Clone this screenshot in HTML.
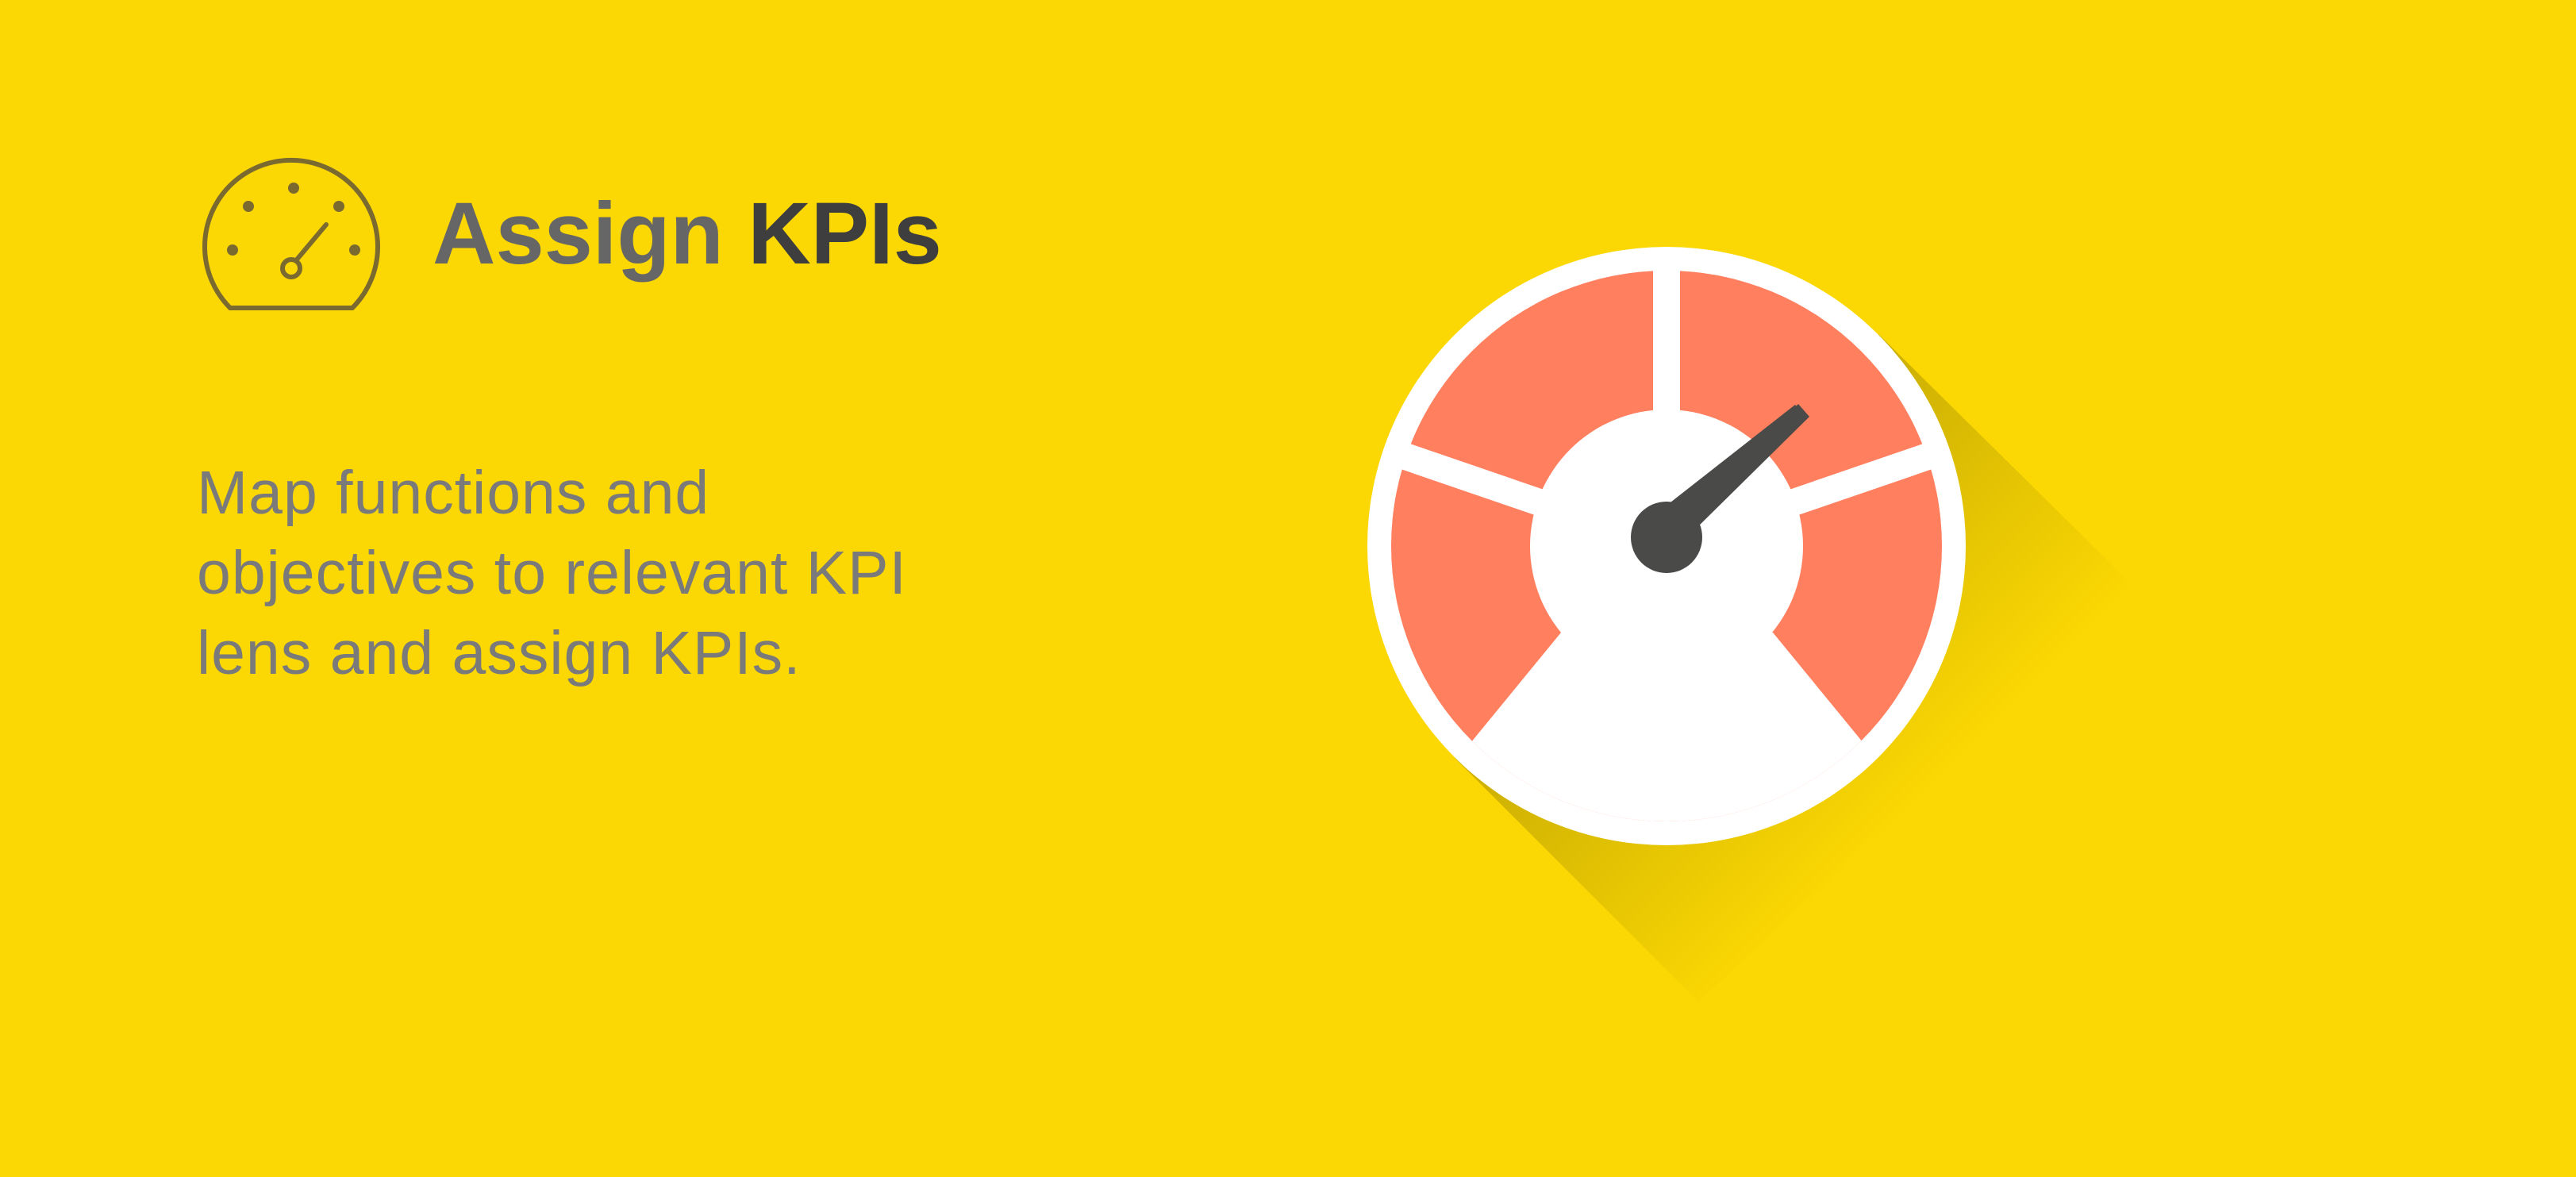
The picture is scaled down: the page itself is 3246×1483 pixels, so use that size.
<!DOCTYPE html>
<html><head><meta charset="utf-8"><style>
html,body{margin:0;padding:0}
body{width:3246px;height:1483px;background:#FBD703;position:relative;overflow:hidden;font-family:"Liberation Sans",Arial,sans-serif}
.title{position:absolute;left:545px;top:240px;font-size:110px;font-weight:bold;line-height:1;letter-spacing:0;white-space:nowrap}
.title .a{color:#666}.title .b{color:#3e3e3e}
.para{position:absolute;left:248px;top:571px;font-size:77px;line-height:101px;color:#7a7a7a;white-space:nowrap;font-family:"Liberation Sans Narrow","Liberation Sans",sans-serif;letter-spacing:1px}
svg{position:absolute;left:0;top:0}
</style></head><body>
<svg width="3246" height="1483" viewBox="0 0 3246 1483">
<defs>
<linearGradient id="sh" gradientUnits="userSpaceOnUse" x1="2100" y1="688" x2="2420" y2="1008">
<stop offset="0" stop-color="#000" stop-opacity="0.2"/>
<stop offset="1" stop-color="#000" stop-opacity="0"/>
</linearGradient>
<clipPath id="cc"><circle cx="2100" cy="688" r="347"/></clipPath>
<clipPath id="co"><circle cx="2100" cy="688" r="376"/></clipPath>
</defs>
<polygon points="2367,421 2700,750 2140,1262 1833,955" fill="url(#sh)"/>
<circle cx="2100" cy="688" r="377" fill="#fff"/>
<circle cx="2100" cy="688" r="347" fill="#FF7F5E"/>
<g stroke="#fff" stroke-width="34" clip-path="url(#co)">
<line x1="2100" y1="688" x2="2100" y2="300"/>
<line x1="2100" y1="688" x2="1730" y2="561"/>
<line x1="2100" y1="688" x2="2470" y2="561"/>
</g>
<circle cx="2100" cy="688" r="172" fill="#fff"/>
<polygon clip-path="url(#cc)" points="1967,797 1840,952 1850,1100 2350,1100 2361,952 2234,797" fill="#fff"/>
<polygon points="2115,662 2266,509 2280,525 2128,675" fill="#4a4a48"/>
<polygon points="2096,640 2262,510 2278,526 2125,672" fill="#4a4a48"/>
<circle cx="2100" cy="677" r="45" fill="#4a4a48"/>
<g stroke="#7a6a30" stroke-width="6" fill="none">
<path d="M290,388 A109,109 0 1 1 444,388 Z"/>
<circle cx="367" cy="338" r="11"/>
<line x1="374" y1="327" x2="411" y2="283" stroke-linecap="round"/>
</g>
<g fill="#7a6a30">
<circle cx="370" cy="237" r="7"/><circle cx="313" cy="260" r="7"/><circle cx="427" cy="260" r="7"/>
<circle cx="293" cy="315" r="7"/><circle cx="447" cy="315" r="7"/>
</g>
</svg>
<div class="title"><span class="a">Assign</span> <span class="b">KPIs</span></div>
<div class="para">Map functions and<br>objectives to relevant KPI<br>lens and assign KPIs.</div>
</body></html>
